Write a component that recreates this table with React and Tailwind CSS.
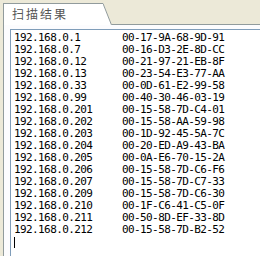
import React from 'react';

const hosts = [
  ['192.168.0.1', '00-17-9A-68-9D-91'],
  ['192.168.0.7', '00-16-D3-2E-8D-CC'],
  ['192.168.0.12', '00-21-97-21-EB-8F'],
  ['192.168.0.13', '00-23-54-E3-77-AA'],
  ['192.168.0.33', '00-0D-61-E2-99-58'],
  ['192.168.0.99', '00-40-30-46-03-19'],
  ['192.168.0.201', '00-15-58-7D-C4-01'],
  ['192.168.0.202', '00-15-58-AA-59-98'],
  ['192.168.0.203', '00-1D-92-45-5A-7C'],
  ['192.168.0.204', '00-20-ED-A9-43-BA'],
  ['192.168.0.205', '00-0A-E6-70-15-2A'],
  ['192.168.0.206', '00-15-58-7D-C6-F6'],
  ['192.168.0.207', '00-15-58-7D-C7-33'],
  ['192.168.0.209', '00-15-58-7D-C6-30'],
  ['192.168.0.210', '00-1F-C6-41-C5-0F'],
  ['192.168.0.211', '00-50-8D-EF-33-8D'],
  ['192.168.0.212', '00-15-58-7D-B2-52'],
];

const App = () => (
  <div className="w-[260px] h-[256px] overflow-hidden bg-[#ece9d8] flex flex-col pt-[3px] pl-[3px]">
    {/* tab strip */}
    <div className="flex h-[22px] shrink-0">
      <div className="w-[100px] border-l border-t border-[#919b9c] bg-white pl-[8px] pb-[1px] flex items-center text-[12px] leading-none tracking-[2px] text-[#555] font-['Noto_Sans_CJK_SC',sans-serif]">
        扫描结果
      </div>
      <svg width="9" height="22" className="shrink-0 block">
        <polygon points="0,0 8.5,22 0,22" fill="#ffffff" />
        <line x1="0" y1="0.5" x2="8.5" y2="22" stroke="#919b9c" strokeWidth="1" />
      </svg>
      <div className="flex-1 border-b border-[#919b9c]" />
    </div>

    {/* tab page with the result edit box */}
    <div className="flex-1 min-h-0 border-l border-[#919b9c] bg-[#fcfcfe] pt-[4px] pl-[6px]">
      <div className="h-full border-l border-t border-[#7f9db9] bg-white pl-[3px] pt-[2px] text-black text-[11px] leading-[12px] tracking-[-0.6px] font-['DejaVu_Sans_Mono',monospace]">
        {hosts.map(([ip, mac]) => (
          <div key={ip} className="grid grid-cols-[108px_auto] h-[12px] whitespace-pre">
            <span>{ip}</span>
            <span>{mac}</span>
          </div>
        ))}
        <div className="h-[12px] flex items-start pt-[1px]">
          <span className="w-[1px] h-[11px] bg-black" />
        </div>
      </div>
    </div>
  </div>
);

export default App;
